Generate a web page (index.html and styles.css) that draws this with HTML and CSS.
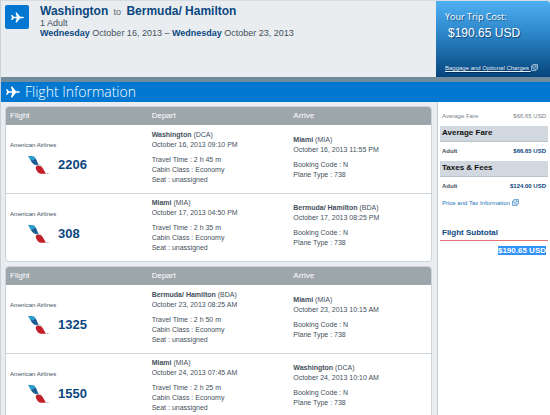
FILE: index.html
```html
<!DOCTYPE html>
<html lang="en">
<head>
    <meta charset="UTF-8">
    <meta name="viewport" content="width=device-width, initial-scale=1.0">
    <title>Washington to Bermuda/ Hamilton - Flight Information</title>
    <link rel="stylesheet" href="styles.css">
</head>
<body>

    <!-- Shared icons -->
    <svg class="sprite" aria-hidden="true">
        <symbol id="plane" viewBox="0 0 26 22">
            <path d="M0 6h2.500l3 3.400h6L9 1h2.500l7 8.400h4c2 0 3.500.6 3.500 1.600s-1.500 1.600-3.500 1.600h-4l-7 8.400H9l2.500-8.400h-6l-3 3.400H0L2 11z"/>
        </symbol>
        <symbol id="popup" viewBox="0 0 14 14">
            <path d="M4 4H1v9h9v-3M4 1h9v9H4zM6 8l4-4M7 3.500h3.500V7" fill="none" stroke="currentColor" stroke-width="1.200"/>
        </symbol>
        <symbol id="airline" viewBox="0 0 21 18">
            <path d="M0 0h4c2 0 3 1 3.700 2.500L9 5.500 3.500 6z" fill="#2b9bc9"/>
            <path d="M3 5 7.800 3l3.200 6.500C7 9.500 4.500 8 3 5z" fill="#1f5c94"/>
            <path d="M7.500 10.500c1-1.300 3-2 6.500-.5l-2-1.500-4 .3z" fill="#b9c4cc"/>
            <path d="M8.500 10c3-.8 5-.2 6 1.800l3.500 6h-5c-2 0-3-1-3.800-2.500C8 13.500 7 11.500 8.500 10z" fill="#c4202b"/>
            <path d="M19 17h1.500v1H19z" fill="#a9adb3"/>
        </symbol>
    </svg>

    <header class="trip-header">
        <div class="trip-summary">
            <span class="trip-icon"><svg><use href="#plane"/></svg></span>
            <div class="trip-text">
                <h1>Washington <small>to</small> Bermuda/ Hamilton</h1>
                <p>1 Adult</p>
                <p><b>Wednesday</b> October 16, 2013 – <b>Wednesday</b> October 23, 2013</p>
            </div>
        </div>
        <div class="trip-cost">
            <p class="cost-label">Your Trip Cost:</p>
            <p class="cost-value">$190.65 USD</p>
            <a href="#">Baggage and Optional Charges <svg class="popup"><use href="#popup"/></svg></a>
        </div>
    </header>

    <div class="section-title">
        <svg><use href="#plane"/></svg>
        <h2>Flight Information</h2>
    </div>

    <div class="content">
        <main class="flights">
            <table class="flight-card">
                <thead>
                    <tr>
                        <th>Flight</th>
                        <th>Depart</th>
                        <th>Arrive</th>
                    </tr>
                </thead>
                <tbody>
                    <tr>
                        <td>
                            <p class="airline">American Airlines</p>
                            <div class="flight-number"><svg><use href="#airline"/></svg>2206</div>
                        </td>
                        <td>
                            <p><b>Washington</b> (DCA)<br>October 16, 2013 09:10 PM</p>
                            <p>Travel Time : 2 h 45 m<br>Cabin Class : Economy<br>Seat : unassigned</p>
                        </td>
                        <td>
                            <p><b>Miami</b> (MIA)<br>October 16, 2013 11:55 PM</p>
                            <p>Booking Code : N<br>Plane Type : 738</p>
                        </td>
                    </tr>
                    <tr>
                        <td>
                            <p class="airline">American Airlines</p>
                            <div class="flight-number"><svg><use href="#airline"/></svg>308</div>
                        </td>
                        <td>
                            <p><b>Miami</b> (MIA)<br>October 17, 2013 04:50 PM</p>
                            <p>Travel Time : 2 h 35 m<br>Cabin Class : Economy<br>Seat : unassigned</p>
                        </td>
                        <td>
                            <p><b>Bermuda/ Hamilton</b> (BDA)<br>October 17, 2013 08:25 PM</p>
                            <p>Booking Code : N<br>Plane Type : 738</p>
                        </td>
                    </tr>
                </tbody>
            </table>

            <table class="flight-card">
                <thead>
                    <tr>
                        <th>Flight</th>
                        <th>Depart</th>
                        <th>Arrive</th>
                    </tr>
                </thead>
                <tbody>
                    <tr>
                        <td>
                            <p class="airline">American Airlines</p>
                            <div class="flight-number"><svg><use href="#airline"/></svg>1325</div>
                        </td>
                        <td>
                            <p><b>Bermuda/ Hamilton</b> (BDA)<br>October 23, 2013 08:25 AM</p>
                            <p>Travel Time : 2 h 50 m<br>Cabin Class : Economy<br>Seat : unassigned</p>
                        </td>
                        <td>
                            <p><b>Miami</b> (MIA)<br>October 23, 2013 10:15 AM</p>
                            <p>Booking Code : N<br>Plane Type : 738</p>
                        </td>
                    </tr>
                    <tr>
                        <td>
                            <p class="airline">American Airlines</p>
                            <div class="flight-number"><svg><use href="#airline"/></svg>1550</div>
                        </td>
                        <td>
                            <p><b>Miami</b> (MIA)<br>October 24, 2013 07:45 AM</p>
                            <p>Travel Time : 2 h 25 m<br>Cabin Class : Economy<br>Seat : unassigned</p>
                        </td>
                        <td>
                            <p><b>Washington</b> (DCA)<br>October 24, 2013 10:10 AM</p>
                            <p>Booking Code : N<br>Plane Type : 738</p>
                        </td>
                    </tr>
                </tbody>
            </table>
        </main>

        <aside class="fares">
            <table class="fare-table">
                <tbody>
                    <tr class="muted"><td>Average Fare</td><td>$66.65 USD</td></tr>
                    <tr><th colspan="2">Average Fare</th></tr>
                    <tr><td>Adult</td><td>$66.65 USD</td></tr>
                    <tr><th colspan="2">Taxes &amp; Fees</th></tr>
                    <tr><td>Adult</td><td>$124.00 USD</td></tr>
                </tbody>
            </table>
            <a class="price-info" href="#">Price and Tax Information <svg class="popup"><use href="#popup"/></svg></a>
            <h3>Flight Subtotal</h3>
            <p class="subtotal"><mark>$190.65 USD</mark></p>
        </aside>
    </div>

</body>
</html>
```
FILE: styles.css
```css
* {
    margin: 0;
    padding: 0;
    box-sizing: border-box;
}
body {
    min-height: 100vh;
    display: flex;
    flex-direction: column;
    font-family: "Liberation Sans", Arial, sans-serif;
    font-size: 7px;
    line-height: 10px;
    color: #44505c;
    background-color: #e9edf0;
    border-left: 1px solid #c9d2d9;
    overflow: hidden;
}
.sprite {
    display: none;
}
.popup {
    width: 7px;
    height: 7px;
    vertical-align: -1px;
}

/* Trip header */
.trip-header {
    display: grid;
    grid-template-columns: 1fr 114px;
    border-top: 1px solid #d5dde2;
    border-bottom: 5px solid #718b9c;
}
.trip-summary {
    display: flex;
    gap: 11px;
    padding: 4px;
}
.trip-icon {
    display: flex;
    align-items: center;
    justify-content: center;
    width: 24px;
    height: 24px;
    border-radius: 2px;
    background-color: #0078d2;
}
.trip-icon svg {
    width: 13px;
    height: 11px;
    fill: #fff;
}
.trip-text {
    font-size: 9px;
}
.trip-text h1 {
    font-size: 12px;
    line-height: 12px;
}
.trip-text h1, .trip-text b {
    color: #0b4780;
}
.trip-text small {
    margin: 0 2px;
    font-size: 9px;
    font-weight: normal;
    color: #5d6873;
}
.trip-cost {
    height: 76px;
    padding: 10px 9px 2px;
    display: flex;
    flex-direction: column;
    color: #fff;
    background: linear-gradient(#4eb0f3, #2b83c6 45%, #06457c);
    border-top-right-radius: 3px;
    text-shadow: 1px 1px 1px rgba(0, 30, 70, 0.6);
}
.cost-label {
    font-family: "Open Sans", sans-serif;
    font-size: 9px;
    line-height: 12px;
}
.cost-value {
    padding: 3px;
    font-size: 12px;
    line-height: 14px;
}
.trip-cost a {
    margin-top: auto;
    padding-bottom: 2px;
    font-size: 6px;
    color: #e4f1fb;
    white-space: nowrap;
}

/* Blue section bar */
.section-title {
    display: flex;
    align-items: center;
    gap: 5px;
    padding: 0 5px;
    height: 20px;
    color: #fff;
    background-color: #0078d2;
}
.section-title svg {
    width: 14px;
    height: 12px;
    fill: #fff;
}
.section-title h2 {
    font-family: "Open Sans", sans-serif;
    font-size: 14px;
    font-weight: 300;
    line-height: 18px;
}

.content {
    flex: 1;
    display: grid;
    grid-template-columns: 1fr 113px;
}

/* Flight tables */
.flights {
    padding: 4px 5px 4px 4px;
}
.flight-card {
    width: 100%;
    margin-bottom: 4px;
    table-layout: fixed;
    border-collapse: separate;
    border-spacing: 0;
    background-color: #fff;
    border: 1px solid #cbd4da;
    border-radius: 4px;
    overflow: hidden;
}
.flight-card th {
    height: 18px;
    padding-left: 4px;
    font-size: 8px;
    font-weight: normal;
    text-align: left;
    color: #fff;
    background-color: #9da6ab;
}
.flight-card td {
    height: 68px;
    padding: 4px 0 8px 4px;
    vertical-align: middle;
}
.flight-card tr + tr td {
    border-top: 1px solid #cbd4da;
}
.flight-card p + p {
    margin-top: 5px;
}
.flight-card .airline {
    font-size: 6px;
}
.flight-number {
    display: flex;
    align-items: center;
    gap: 9px;
    padding: 6px 0 0 18px;
    font-size: 13px;
    font-weight: bold;
    line-height: 18px;
    color: #0b4780;
}
.flight-number svg {
    width: 21px;
    height: 18px;
}

/* Fare column */
.fares {
    padding: 4px 2px;
    font-size: 6px;
    background-color: #fff;
    border-left: 1px solid #c3ccd3;
}
.fare-table {
    width: 100%;
    border-collapse: collapse;
}
.fare-table td {
    height: 20px;
    padding: 0 2px;
    font-weight: bold;
}
.fare-table td + td {
    text-align: right;
    color: #0b4780;
}
.fare-table .muted td {
    font-weight: normal;
    color: #77808a;
}
.fare-table th {
    height: 15px;
    padding: 0 2px;
    font-size: 8px;
    text-align: left;
    color: #111;
    background-color: #d1d8df;
    border-bottom: 1px solid #b9c3cc;
}
.price-info {
    display: block;
    padding: 2px;
    color: #2272b9;
    text-decoration: none;
}
.fares h3 {
    margin: 18px 0 5px;
    padding: 0 2px 2px;
    font-size: 8px;
    color: #0b4780;
    border-bottom: 1px solid #e0737c;
}
.subtotal {
    padding: 0 2px;
    font-size: 8px;
    font-weight: bold;
    text-align: right;
}
.subtotal mark {
    color: #fff;
    background-color: #3292f5;
}
```
